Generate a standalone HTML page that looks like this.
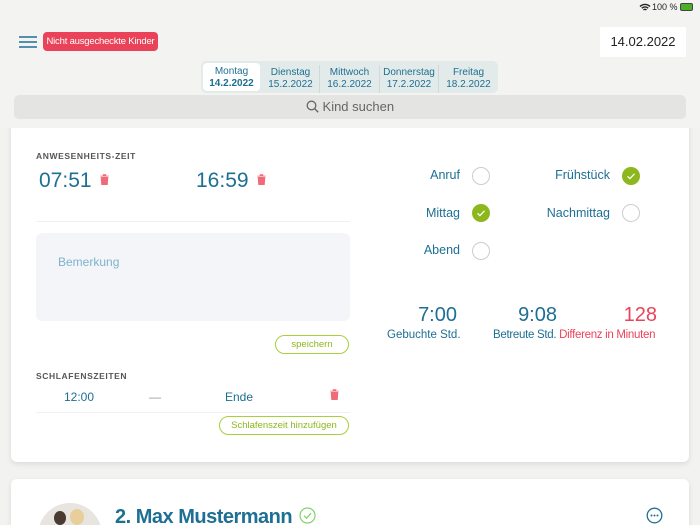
<!DOCTYPE html>
<html style="width:700px;height:525px;overflow:hidden"><head><meta charset="utf-8"><style>
*{margin:0;padding:0;box-sizing:border-box}
body{width:700px;height:525px;background:#f2f3f1;font-family:"Liberation Sans",sans-serif;position:relative;overflow:hidden;color:#1d6f93}
.a{position:absolute}
.card{position:absolute;left:11px;width:678px;background:#fff;border-radius:6px;box-shadow:0 2px 6px rgba(0,0,0,.1)}
.lbl{font-size:8.5px;font-weight:bold;color:#555;letter-spacing:.6px}
.circ{position:absolute;width:18px;height:18px;border-radius:50%;border:1.3px solid #ccc}
.chk{position:absolute;width:18px;height:18px;border-radius:50%;background:#8cb71d}
.t{font-size:12.5px;color:#1d6f93;text-align:right}
.btn{position:absolute;border:1.3px solid #a8cf3c;border-radius:10px;color:#8cb71d;font-size:9.5px;text-align:center;line-height:17px}
.day{position:absolute;top:4px;height:28px;text-align:center;font-size:10px;line-height:12px;color:#1d6f93}
</style></head><body>
<div class="card" style="top:120px;height:342px"></div>
<div class="a" style="left:0;top:0;width:700px;height:128px;background:#f3f4f2"></div>
<div class="a" style="left:652px;top:2px;font-size:9px;color:#222">100 %</div>
<svg class="a" style="left:639px;top:3px" width="12" height="9" viewBox="0 0 12 9"><path d="M1 3.5a7 7 0 0 1 10 0M2.8 5.3a4.5 4.5 0 0 1 6.4 0M4.5 7a2 2 0 0 1 3 0" stroke="#222" stroke-width="1.4" fill="none"/></svg>
<div class="a" style="left:680px;top:3px;width:13px;height:8px;border:1px solid #444;border-radius:2px;background:#4caf28"></div>
<svg class="a" style="left:19px;top:36px" width="18" height="12"><path d="M0 1h18M0 6h18M0 11h18" stroke="#1d6f93" stroke-width="1.6"/></svg>
<div class="a" style="left:43px;top:32px;width:115px;height:19px;background:#ea4359;border-radius:4px;color:#fff;font-size:9.5px;line-height:19px;text-align:center;letter-spacing:-.2px">Nicht ausgecheckte Kinder</div>
<div class="a" style="left:600px;top:27px;width:86px;height:30px;background:#fff;font-size:13px;color:#222;line-height:30px;text-align:center">14.02.2022</div>
<div class="a" style="left:201px;top:61px;width:297px;height:32px;background:#e3ebea;border-radius:5px">
<div class="day" style="left:2px;width:57px;background:#fff;border-radius:4px;top:2px;height:28px;padding-top:3px">Montag<br><b>14.2.2022</b></div>
<div class="day" style="left:61px;width:58px;padding-top:2px;border-right:1px solid #cfd9d8">Dienstag<br>15.2.2022</div>
<div class="day" style="left:119px;width:60px;padding-top:2px;border-right:1px solid #cfd9d8">Mittwoch<br>16.2.2022</div>
<div class="day" style="left:179px;width:59px;padding-top:2px;border-right:1px solid #cfd9d8">Donnerstag<br>17.2.2022</div>
<div class="day" style="left:238px;width:59px;padding-top:2px">Freitag<br>18.2.2022</div>
</div>
<div class="a" style="left:14px;top:95px;width:672px;height:24px;background:#e4e5e2;border-radius:5px;text-align:center;line-height:24px;font-size:13px;color:#666">
<svg style="vertical-align:-2px" width="13" height="13"><circle cx="5.5" cy="5.5" r="4.3" stroke="#666" stroke-width="1.3" fill="none"/><path d="M8.6 8.6l3.6 3.6" stroke="#666" stroke-width="1.4"/></svg> Kind suchen</div>

<div class="a lbl" style="left:36px;top:151px">ANWESENHEITS-ZEIT</div>
<div class="a" style="left:39px;top:169px;font-size:21px">07:51</div>
<div class="a" style="left:196px;top:169px;font-size:21px">16:59</div>
<svg class="a" style="left:100px;top:174px" width="9" height="11"><path d="M0 2h9M3 2V0.5h3V2M1 3h7l-.6 8H1.6z" fill="#f06b7a" stroke="#f06b7a" stroke-width=".6"/></svg>
<svg class="a" style="left:257px;top:174px" width="9" height="11"><path d="M0 2h9M3 2V0.5h3V2M1 3h7l-.6 8H1.6z" fill="#f06b7a" stroke="#f06b7a" stroke-width=".6"/></svg>
<div class="a" style="left:36px;top:221px;width:314px;height:1px;background:#f0f0f0"></div>
<div class="a" style="left:36px;top:233px;width:314px;height:88px;background:#f3f5f9;border-radius:6px"></div>
<div class="a" style="left:58px;top:255px;font-size:12px;color:#7eb3cb">Bemerkung</div>
<div class="btn" style="left:275px;top:335px;width:74px;height:19px">speichern</div>
<div class="a lbl" style="left:36px;top:371px">SCHLAFENSZEITEN</div>
<div class="a" style="left:64px;top:390px;font-size:12px">12:00</div>
<div class="a" style="left:149px;top:390px;font-size:12px;color:#999">—</div>
<div class="a" style="left:225px;top:390px;font-size:12px">Ende</div>
<svg class="a" style="left:330px;top:389px" width="9" height="11"><path d="M0 2h9M3 2V0.5h3V2M1 3h7l-.6 8H1.6z" fill="#f06b7a" stroke="#f06b7a" stroke-width=".6"/></svg>
<div class="a" style="left:36px;top:412px;width:314px;height:1px;background:#f0f0f0"></div>
<div class="btn" style="left:219px;top:416px;width:130px;height:19px">Schlafenszeit hinzufügen</div>

<div class="a t" style="left:390px;top:168px;width:70px">Anruf</div>
<div class="circ" style="left:472px;top:167px"></div>
<div class="a t" style="left:390px;top:206px;width:70px">Mittag</div>
<div class="chk" style="left:472px;top:204px"><svg width="18" height="18"><path d="M5.5 9.3l2.4 2.3 4.6-4.8" stroke="#fff" stroke-width="1.2" fill="none"/></svg></div>
<div class="a t" style="left:390px;top:243px;width:70px">Abend</div>
<div class="circ" style="left:472px;top:242px"></div>
<div class="a t" style="left:520px;top:168px;width:90px">Frühstück</div>
<div class="chk" style="left:622px;top:167px"><svg width="18" height="18"><path d="M5.5 9.3l2.4 2.3 4.6-4.8" stroke="#fff" stroke-width="1.2" fill="none"/></svg></div>
<div class="a t" style="left:520px;top:206px;width:90px">Nachmittag</div>
<div class="circ" style="left:622px;top:204px"></div>

<div class="a" style="left:400px;top:304px;width:57px;text-align:right;font-size:20px">7:00</div>
<div class="a" style="left:387px;top:329px;font-size:11.5px">Gebuchte Std.</div>
<div class="a" style="left:500px;top:304px;width:57px;text-align:right;font-size:20px">9:08</div>
<div class="a" style="left:493px;top:329px;font-size:11.5px;letter-spacing:-.3px">Betreute Std. <span style="color:#ea4359">Differenz in Minuten</span></div>
<div class="a" style="left:600px;top:304px;width:57px;text-align:right;font-size:20px;color:#ea4359">128</div>

<div class="card" style="top:479px;height:60px"></div>
<div class="a" style="left:38px;top:503px;width:64px;height:22px;overflow:hidden"><div class="a" style="left:0;top:0;width:64px;height:64px;border-radius:50%;background:#e8e4df">
<div class="a" style="left:16px;top:8px;width:12px;height:14px;border-radius:50%;background:#4a3a30"></div>
<div class="a" style="left:32px;top:6px;width:14px;height:16px;border-radius:50%;background:#e8cf9a"></div>
</div></div>
<div class="a" style="left:115px;top:506px;font-size:20px;font-weight:bold;color:#1d6f93;letter-spacing:-.5px">2. Max Mustermann</div>
<svg class="a" style="left:299px;top:507px" width="17" height="17"><circle cx="8.5" cy="8.5" r="7.5" stroke="#7fd36b" stroke-width="1.2" fill="none"/><path d="M5 8.7l2.5 2.5 4.5-5" stroke="#7fd36b" stroke-width="1.2" fill="none"/></svg>
<svg class="a" style="left:646px;top:507px" width="17" height="17"><circle cx="8.5" cy="8.5" r="7.3" stroke="#1d6f93" stroke-width="1.3" fill="none"/><circle cx="5.5" cy="8.5" r="1" fill="#1d6f93"/><circle cx="8.5" cy="8.5" r="1" fill="#1d6f93"/><circle cx="11.5" cy="8.5" r="1" fill="#1d6f93"/></svg>
</body></html>
